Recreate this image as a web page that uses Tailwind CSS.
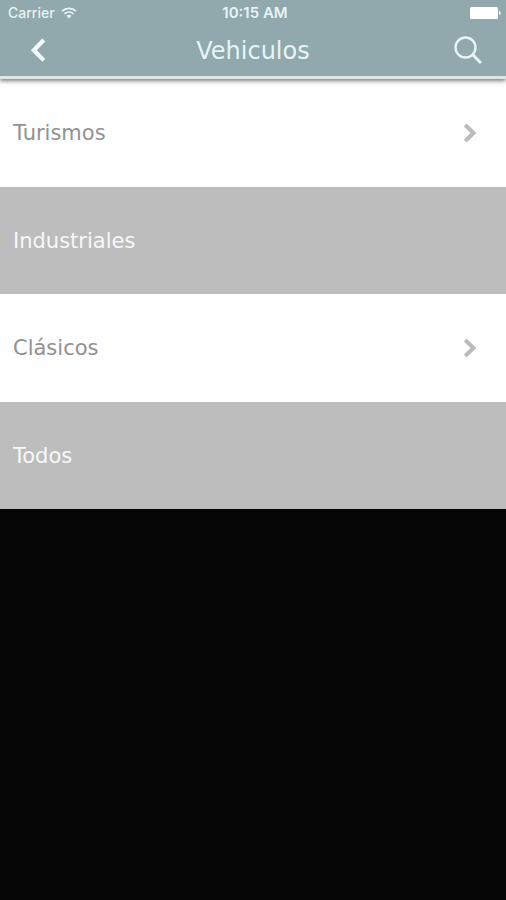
<!DOCTYPE html>
<html lang="es">
<head>
<meta charset="utf-8">
<meta name="viewport" content="width=device-width, initial-scale=1">
<title>Vehiculos</title>
<script src="https://cdn.jsdelivr.net/npm/@tailwindcss/browser@4"></script>
</head>
<body class="min-h-screen bg-[#060606] font-['DejaVu_Sans',Verdana,sans-serif]">
<header class="relative border-b-3 border-[#dde5e5] bg-[#91a8ad] text-[#e6f4f6] shadow-[0_2px_4px_rgba(0,0,0,0.5)]">
  <div class="grid h-7 grid-cols-[1fr_auto_1fr] items-center px-1 pb-0.5 font-['Inter','Liberation_Sans',sans-serif] text-sm">
    <div class="flex items-center gap-1.5 pl-1">
      <span class="font-medium">Carrier</span>
      <svg class="h-3 w-4" viewBox="0 0 16 12" fill="none" stroke="currentColor" stroke-width="1.7" aria-label="Wi-Fi">
        <path d="M1 4.2C5 0.4 11 0.4 15 4.2M3.4 6.8C6 4.4 10 4.4 12.6 6.8"/>
        <path d="M5.5 8.8C7 7.5 9 7.5 10.5 8.8L8 11.4Z" fill="currentColor" stroke="none"/>
      </svg>
    </div>
    <time class="pl-1 text-center text-[15px] font-semibold">10:15 AM</time>
    <svg class="h-3 w-8 justify-self-end" viewBox="0 0 32 12" fill="#fff" aria-label="Batería">
      <rect x="0" y="0" width="28" height="12" rx="1.5"/>
      <path d="M29 4C31.3 4.4 31.3 7.6 29 8Z"/>
    </svg>
  </div>
  <div class="grid h-12 grid-cols-[1fr_auto_1fr] items-start px-6">
    <button type="button" aria-label="Volver" class="flex h-11 w-7 items-center justify-center text-[#f4fcfd]">
      <svg class="h-6 w-4" viewBox="0 0 16 24" fill="none" stroke="currentColor" stroke-width="4.2"><path d="M13.8 2L3.8 12.2L13.8 22.4"/></svg>
    </button>
    <h1 class="text-2xl leading-[46px]">Vehiculos</h1>
    <button type="button" aria-label="Buscar" class="flex h-11 w-7 items-center justify-center justify-self-end">
      <svg class="size-7" viewBox="0 0 28 28" fill="none" stroke="currentColor" stroke-width="2.4"><circle cx="11.5" cy="11.5" r="10"/><path d="M18.8 18.8L27 27" stroke-width="3"/></svg>
    </button>
  </div>
</header>
<main>
  <nav class="grid h-[430px] grid-rows-4 text-[21px]">
    <a href="#turismos" class="flex items-center justify-between bg-[#fefefe] pl-[13px] pr-7 text-[#929292]"><span class="pt-0.5">Turismos</span>
      <svg class="h-5 w-4 text-[#bbbbbb]" viewBox="0 0 16 20" fill="none" stroke="currentColor" stroke-width="4"><path d="M3.2 2L11.5 10L3.2 18"/></svg>
    </a>
    <a href="#industriales" class="flex items-center bg-[#bdbdbd] px-[13px] text-[#f8f8f8]"><span class="pt-0.5">Industriales</span></a>
    <a href="#clasicos" class="flex items-center justify-between bg-[#fefefe] pl-[13px] pr-7 text-[#929292]"><span class="pt-0.5">Clásicos</span>
      <svg class="h-5 w-4 text-[#bbbbbb]" viewBox="0 0 16 20" fill="none" stroke="currentColor" stroke-width="4"><path d="M3.2 2L11.5 10L3.2 18"/></svg>
    </a>
    <a href="#todos" class="flex items-center bg-[#bdbdbd] px-[13px] text-[#f8f8f8]"><span class="pt-0.5">Todos</span></a>
  </nav>
</main>
</body>
</html>
